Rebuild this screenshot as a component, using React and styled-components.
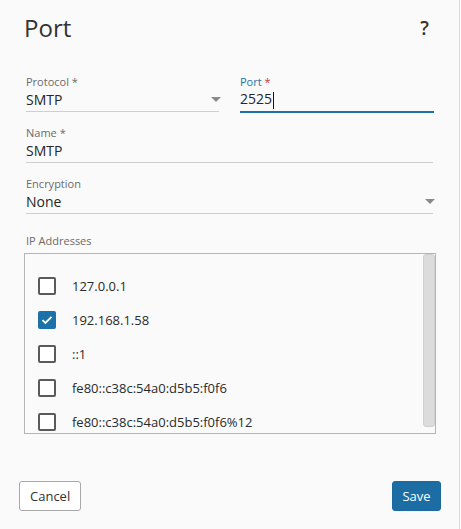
import styled, { createGlobalStyle } from "styled-components";

// colours picked from the dialog
const colors = {
  bg: "#fafafa",
  text: "#262626",
  label: "#6b6b6b",
  line: "#cfcfcf",
  blue: "#1c72a8",
  red: "#d13438",
};

const GlobalStyle = createGlobalStyle`
  html, body {
    margin: 0;
    padding: 0;
    background: #ffffff;
  }
  body {
    font-family: "Open Sans", "Noto Sans", "Liberation Sans", sans-serif;
    color: ${colors.text};
  }
`;

const Dialog = styled.div`
  box-sizing: border-box;
  width: 460px;
  height: 529px;
  display: flex;
  flex-direction: column;
  background: ${colors.bg};
  border-right: 1px solid #d9d9d9;
`;

const Header = styled.header`
  display: flex;
  align-items: center;
  justify-content: space-between;
  padding: 12px 30px 0 24px;
  height: 32px;
`;

const Title = styled.h1`
  margin: 0;
  font-size: 24px;
  line-height: 32px;
  font-weight: 400;
  color: #333;
`;

const Help = styled.span`
  font-size: 19px;
  font-weight: 600;
  color: #333;
`;

const Body = styled.div`
  display: flex;
  flex-direction: column;
  gap: 14px;
  padding: 31px 26px 0 26px;
`;

const Row = styled.div`
  display: grid;
  grid-template-columns: 193px 194px;
  column-gap: 21px;
`;

const Field = styled.div`
  display: flex;
  flex-direction: column;
`;

const Label = styled.label`
  font-size: 11px;
  line-height: 14px;
  color: ${(p) => (p.$active ? colors.blue : colors.label)};

  span {
    color: ${(p) => (p.$active ? colors.red : colors.label)};
  }
`;

const Value = styled.div`
  display: flex;
  align-items: center;
  justify-content: space-between;
  height: 20px;
  padding-bottom: 2px;
  font-size: 14px;
  color: ${colors.text};
  border-bottom: ${(p) => (p.$active ? `2px solid ${colors.blue}` : `1px solid ${colors.line}`)};
  margin-bottom: ${(p) => (p.$active ? "-1px" : "0")};
`;

const Caret = styled.span`
  display: inline-block;
  width: 1px;
  height: 17px;
  margin-left: 1px;
  background: #111;
  vertical-align: middle;
`;

const Arrow = styled.span`
  width: 0;
  height: 0;
  margin-right: -2px;
  border-left: 5px solid transparent;
  border-right: 5px solid transparent;
  border-top: 5px solid #8a8a8a;
`;

const Addresses = styled.section`
  padding: 20px 26px 0 26px;
`;

const ListLabel = styled.div`
  font-size: 11px;
  line-height: 14px;
  color: ${colors.label};
`;

const ListBox = styled.div`
  box-sizing: border-box;
  display: flex;
  height: 181px;
  margin: 5px 0 0 -2px;
  width: 412px;
  border: 1px solid #b5b5b5;
  background: ${colors.bg};
  overflow: hidden;
`;

const Items = styled.ul`
  flex: 1;
  list-style: none;
  margin: 0;
  padding: 15px 0 0 13px;
  overflow: hidden;
`;

const Item = styled.li`
  display: flex;
  align-items: center;
  height: 34px;
  gap: 16px;
  font-size: 13px;
  color: #2a2a2a;
`;

const Box = styled.span`
  box-sizing: border-box;
  flex: none;
  width: 18px;
  height: 18px;
  border-radius: 2px;
  border: ${(p) => (p.$checked ? "none" : "2px solid #5a5a5a")};
  background: ${(p) => (p.$checked ? colors.blue : "#fff")};
  display: flex;
  align-items: center;
  justify-content: center;
`;

const Scrollbar = styled.div`
  width: 12px;
  padding: 0 0 6px 0;
  display: flex;
`;

const Thumb = styled.div`
  flex: 1;
  background: #dcdcdc;
  border-radius: 3px;
  border: 1px solid #d0d0d0;
`;

const Footer = styled.footer`
  margin-top: auto;
  display: flex;
  justify-content: space-between;
  padding: 0 18px 18px 19px;
`;

const Button = styled.button`
  box-sizing: border-box;
  height: 30px;
  padding: 0 ${(p) => (p.$primary ? "9px" : "10px")};
  min-width: ${(p) => (p.$primary ? "49px" : "60px")};
  font-family: inherit;
  font-size: 13px;
  border-radius: 3px;
  border: 1px solid ${(p) => (p.$primary ? "#1a6a9e" : "#a8a8a8")};
  background: ${(p) => (p.$primary ? "#1b6da3" : "#ffffff")};
  color: ${(p) => (p.$primary ? "#ffffff" : "#333")};
`;

const addresses = [
  { ip: "127.0.0.1", checked: false },
  { ip: "192.168.1.58", checked: true },
  { ip: "::1", checked: false },
  { ip: "fe80::c38c:54a0:d5b5:f0f6", checked: false },
  { ip: "fe80::c38c:54a0:d5b5:f0f6%12", checked: false },
];

const Check = () => (
  <svg width="12" height="10" viewBox="0 0 12 10" fill="none">
    <path d="M1.5 5.2 L4.4 8 L10.5 1.8" stroke="#fff" strokeWidth="1.8" />
  </svg>
);

const App = () => {
  return (
    <>
      <GlobalStyle />
      <Dialog>
        <Header>
          <Title>Port</Title>
          <Help>?</Help>
        </Header>

        <Body>
          <Row>
            <Field>
              <Label>
                Protocol <span>*</span>
              </Label>
              <Value>
                SMTP
                <Arrow />
              </Value>
            </Field>
            <Field>
              <Label $active>
                Port <span>*</span>
              </Label>
              <Value $active>
                <span>
                  2525
                  <Caret />
                </span>
              </Value>
            </Field>
          </Row>

          <Field>
            <Label>
              Name <span>*</span>
            </Label>
            <Value>SMTP</Value>
          </Field>

          <Field>
            <Label>Encryption</Label>
            <Value>
              None
              <Arrow />
            </Value>
          </Field>
        </Body>

        <Addresses>
          <ListLabel>IP Addresses</ListLabel>
          <ListBox>
            <Items>
              {addresses.map((a) => (
                <Item key={a.ip}>
                  <Box $checked={a.checked}>{a.checked && <Check />}</Box>
                  {a.ip}
                </Item>
              ))}
            </Items>
            <Scrollbar>
              <Thumb />
            </Scrollbar>
          </ListBox>
        </Addresses>

        <Footer>
          <Button>Cancel</Button>
          <Button $primary>Save</Button>
        </Footer>
      </Dialog>
    </>
  );
};

export default App;
